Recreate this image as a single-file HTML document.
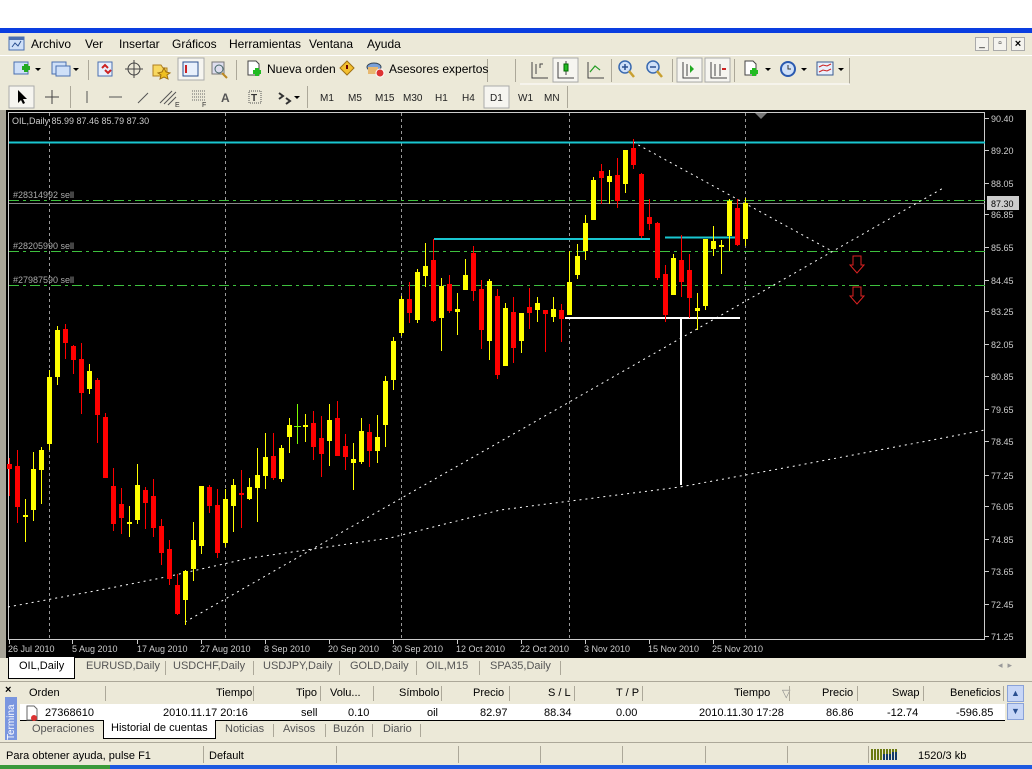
<!DOCTYPE html>
<html><head><meta charset="utf-8"><style>
*{margin:0;padding:0;box-sizing:border-box}
body{width:1032px;height:769px;overflow:hidden;background:#ECE9D8;font-family:"Liberation Sans",sans-serif;font-size:12px;color:#000;position:relative}
.a{position:absolute}
.menu span{position:absolute;top:37px;font-size:12px}
.tb{position:absolute;background:#ECE9D8}
.ic{position:absolute;width:16px;height:16px}
.tf{position:absolute;top:89px;font-size:11px}
.tab{position:absolute;top:660px;font-size:11px;color:#555}
.hd{position:absolute;top:687px;font-size:11px}
.rw{position:absolute;top:707px;font-size:11px}
.sep{position:absolute;width:1px;background:#aca899}
</style></head><body>
<div class="a" style="left:0;top:0;width:1032px;height:28px;background:#fff"></div>
<div class="a" style="left:0;top:28px;width:1032px;height:5px;background:#0A3EE0"></div>
<div class="a" style="left:0;top:765px;width:1032px;height:4px;background:#1D5AE0"></div>
<div class="a" style="left:0;top:765px;width:110px;height:4px;background:#3A9A3A"></div>
<!-- menu -->
<div class="menu">
<svg class="a" style="left:8px;top:35px" width="18" height="18"><rect x="1" y="2" width="15" height="13" fill="#cfe0f8" stroke="#4a6fb0"/><rect x="1" y="2" width="15" height="3" fill="#4a6fb0"/><path d="M4 12l3-4 3 3 3-5" stroke="#2a4f90" fill="none"/></svg>
<span style="left:31px">Archivo</span><span style="left:85px">Ver</span><span style="left:119px">Insertar</span><span style="left:172px">Gráficos</span><span style="left:229px">Herramientas</span><span style="left:309px">Ventana</span><span style="left:367px">Ayuda</span>
</div>
<div class="a" style="left:975px;top:37px;width:14px;height:14px;border:1px solid #aaa;background:#f4f3ee;font-size:10px;text-align:center;line-height:12px">_</div>
<div class="a" style="left:993px;top:37px;width:14px;height:14px;border:1px solid #aaa;background:#f4f3ee;font-size:10px;text-align:center;line-height:12px">▫</div>
<div class="a" style="left:1011px;top:37px;width:14px;height:14px;border:1px solid #aaa;background:#f4f3ee;font-size:11px;text-align:center;line-height:12px;font-weight:bold">×</div>
<div class="a" style="left:0;top:55px;width:1032px;height:1px;background:#fff"></div>
<!-- toolbar 1 -->
<svg class="a" style="left:0;top:56px" width="1032" height="54">
<g fill="none">
<rect x="14" y="6" width="14" height="12" fill="#cfe0f8" stroke="#4a6fb0"/><path d="M22 12h8M26 8v8" stroke="#2a2" stroke-width="4"/><path d="M35 12l3 3 3-3z" fill="#000"/>
<rect x="52" y="6" width="14" height="12" fill="#cfe0f8" stroke="#4a6fb0"/><rect x="56" y="10" width="14" height="10" fill="#cfe0f8" stroke="#4a6fb0"/><path d="M73 12l3 3 3-3z" fill="#000"/>
<line x1="88.5" y1="4" x2="88.5" y2="24" stroke="#aca899"/>
<rect x="98" y="6" width="14" height="14" fill="#e8f0fc" stroke="#4a6fb0"/><path d="M102 12l3-3 3 3M105 14l3 3 3-3" stroke="#c22" stroke-width="2"/>
<circle cx="134" cy="13" r="6" stroke="#444"/><path d="M134 4v18M125 13h18" stroke="#444"/>
<path d="M153 9h8l2 3h4v8h-14z" fill="#f8d860" stroke="#b08020"/><path d="M164 12l2 4 4 1-3 2 1 4-4-2-4 2 1-4-3-2 4-1z" fill="#f0c020" stroke="#a07010"/>
<rect x="178" y="2" width="26" height="22" fill="#f6f5f0" stroke="#aaa"/><rect x="183" y="6" width="15" height="14" fill="#e8f0fc" stroke="#2a4f90"/><path d="M186 9v8" stroke="#c22" stroke-width="2"/>
<rect x="212" y="6" width="12" height="12" fill="#dde" stroke="#777"/><circle cx="219" cy="13" r="4" stroke="#466"/><path d="M222 17l5 5" stroke="#b82" stroke-width="2"/>
<line x1="236.5" y1="4" x2="236.5" y2="24" stroke="#aca899"/>
<path d="M248 5h8l3 3v11h-11z" fill="#fff" stroke="#444"/><path d="M253 16h8M257 12v8" stroke="#2b2" stroke-width="4"/>
<path d="M347 5l7 7-7 7-7-7z" fill="#f4c030" stroke="#a07010"/><path d="M347 9v4" stroke="#600" stroke-width="2"/>
<ellipse cx="374" cy="11" rx="7" ry="4" fill="#7aa0d8" stroke="#345"/><rect x="368" y="11" width="10" height="7" fill="#e8b870"/><circle cx="380" cy="17" r="4" fill="#d33" stroke="#fff"/>
<line x1="487.5" y1="3" x2="487.5" y2="26" stroke="#aca899"/>
<line x1="515.5" y1="3" x2="515.5" y2="26" stroke="#aca899"/>
<path d="M532 6v16h16M536 8v10M540 12v-4h3" stroke="#444"/>
<rect x="553" y="2" width="25" height="24" fill="#f6f5f0" stroke="#aaa"/><path d="M558 6v16h16M566 5v14" stroke="#444"/><rect x="564" y="8" width="4" height="7" fill="#2b2" stroke="#060"/>
<path d="M588 6v16h16M590 16l5-6 5 4" stroke="#444"/><path d="M590 16l5-6 5 4" stroke="#2a2"/>
<line x1="611.5" y1="3" x2="611.5" y2="26" stroke="#aca899"/>
<circle cx="625" cy="11" r="6" fill="#cfe0f8" stroke="#3a6ab0" stroke-width="1.5"/><path d="M622 11h6M625 8v6" stroke="#2a4f90" stroke-width="1.5"/><path d="M629 15l5 6" stroke="#c9a030" stroke-width="2.5"/>
<circle cx="653" cy="11" r="6" fill="#cfe0f8" stroke="#3a6ab0" stroke-width="1.5"/><path d="M650 11h6" stroke="#2a4f90" stroke-width="1.5"/><path d="M657 15l5 6" stroke="#c9a030" stroke-width="2.5"/>
<line x1="672.5" y1="3" x2="672.5" y2="26" stroke="#aca899"/>
<rect x="677" y="2" width="25" height="24" fill="#f6f5f0" stroke="#aaa"/><path d="M683 6v16h16M687 8v12" stroke="#444"/><path d="M690 9l4 4-4 4z" fill="#2a2"/>
<rect x="705" y="2" width="25" height="24" fill="#f6f5f0" stroke="#aaa"/><path d="M711 6v16h16M715 8v12M720 8v12" stroke="#444"/><path d="M722 13h4" stroke="#c22" stroke-width="2"/>
<line x1="734.5" y1="3" x2="734.5" y2="26" stroke="#aca899"/>
<path d="M745 5h8l3 3v11h-11z" fill="#fff" stroke="#444"/><path d="M750 16h8M754 12v8" stroke="#2b2" stroke-width="4"/><path d="M765 12l3 3 3-3z" fill="#000"/>
<circle cx="788" cy="13" r="7" fill="#cfe0f8" stroke="#2a5ab0" stroke-width="2"/><path d="M788 9v4h3" stroke="#333"/><path d="M801 12l3 3 3-3z" fill="#000"/>
<rect x="817" y="6" width="16" height="13" fill="#e8f0fc" stroke="#3a5a90"/><path d="M819 11l4-2 4 1 4-2M819 16l4-2 4 1 4-2" stroke="#c22"/><path d="M838 12l3 3 3-3z" fill="#000"/>
<line x1="849.5" y1="2" x2="849.5" y2="28" stroke="#aca899"/>
<path d="M520 28h330" stroke="#fff"/>
<!-- toolbar2 -->
<rect x="9" y="30" width="25" height="22" fill="#f6f5f0" stroke="#aaa"/><path d="M18 34v13l3-3 2 4 2-1-2-4h4z" fill="#000"/>
<path d="M52 34v14M45 41h14" stroke="#444"/>
<line x1="70.5" y1="30" x2="70.5" y2="52" stroke="#aca899"/>
<path d="M87 35v12M109 41h13M138 47l10-10" stroke="#555"/>
<path d="M160 47l12-12M164 48l12-12M168 49l8-8" stroke="#555"/><text x="175" y="51" font-size="7" fill="#333">E</text>
<path d="M192 35h14M192 38h14M192 41h14M192 44h14" stroke="#666" stroke-dasharray="1 1"/><text x="202" y="51" font-size="7" fill="#333">F</text>
<text x="221" y="46" font-size="12" font-weight="bold" fill="#555" font-family="Liberation Sans">A</text>
<rect x="249" y="35" width="12" height="12" fill="none" stroke="#555" stroke-dasharray="1 1"/><text x="251" y="45" font-size="10" font-weight="bold" fill="#333">T</text>
<path d="M279 37l4 3-4 3M286 42l4 3-4 3" stroke="#333" stroke-width="2"/><path d="M294 40l3 3 3-3z" fill="#000"/>
<line x1="307.5" y1="30" x2="307.5" y2="52" stroke="#aca899"/>
<line x1="567.5" y1="30" x2="567.5" y2="52" stroke="#aca899"/>
<rect x="484" y="30" width="25" height="22" fill="#f6f5f0" stroke="#aaa"/>
</g>
<g font-size="10" fill="#222" font-family="Liberation Sans"><text x="320" y="45">M1</text><text x="348" y="45">M5</text><text x="375" y="45">M15</text><text x="403" y="45">M30</text><text x="435" y="45">H1</text><text x="462" y="45">H4</text><text x="490" y="45">D1</text><text x="518" y="45">W1</text><text x="544" y="45">MN</text></g>
</svg>
<div class="a" style="left:267px;top:62px;font-size:12px">Nueva orden</div>
<div class="a" style="left:389px;top:62px;font-size:12px">Asesores expertos</div>
<!-- chart -->
<div class="a" style="left:6px;top:110px;width:1020px;height:548px;background:#000"></div>
<svg class="a" style="left:0;top:110px" width="1032" height="548" viewBox="0 110 1032 548">
<rect x="8.5" y="112.5" width="976" height="527" fill="none" stroke="#ccc"/>
<g stroke="#999" stroke-dasharray="3 3"><path d="M49.5 113V640M225.5 113V640M401.5 113V640M569.5 113V640M745.5 113V640"/></g>
<path d="M755 113h12l-6 6z" fill="#777"/>
<path d="M9 142.5H985" stroke="#19c6d0" stroke-width="2"/>
<path d="M9 200.5H985" stroke="#3ec03e" stroke-dasharray="10 4 3 4"/>
<path d="M9 203.5H985" stroke="#888"/>
<path d="M9 251.5H985M9 285.5H985" stroke="#3ec03e" stroke-dasharray="10 4 3 4"/>
<path d="M434 239h216M665 237.5h70" stroke="#19c6d0" stroke-width="2"/>
<path d="M565 318h175M681 318v167" stroke="#fff" stroke-width="2"/>
<path d="M633 142L830 250M185 622L945 187M8 607L100 590L166 577L250 558L390 538L500 510L680 487L800 465L985 430" stroke="#fff" fill="none" stroke-dasharray="2 4"/>
<path d="M853 256h8v9h3l-7 8-7-8h3z M853 287h8v9h3l-7 8-7-8h3z" fill="none" stroke="#d22"/>
<g font-size="9" fill="#aaa" font-family="Liberation Sans"><text x="13" y="198">#28314992 sell</text><text x="13" y="249">#28205990 sell</text><text x="13" y="283">#27987590 sell</text></g>
<text x="12" y="124" font-size="9" fill="#ccc" font-family="Liberation Sans">OIL,Daily  85.99 87.46 85.79 87.30</text>
<!-- wicks -->
<path stroke="#FF0000" fill="none" d="M9.5 458V496M17.5 450V523M65.5 324V359M73.5 345V374M81.5 343V414M97.5 378V443M105.5 413V478M113.5 468V531M121.5 488V534M145.5 487V529M153.5 479V537M161.5 519V565M169.5 540V585M177.5 574V615M209.5 485V513M217.5 489V558M241.5 470V528M273.5 433V480M313.5 411V460M321.5 416V477M337.5 401V456M345.5 434V470M369.5 424V467M409.5 282V323M433.5 239V322M449.5 275V313M473.5 246V301M481.5 280V349M497.5 289V379M513.5 297V363M529.5 288V329M545.5 310V352M561.5 304V342M601.5 164V204M617.5 158V208M633.5 139V169M641.5 173V238M649.5 199V230M657.5 222V280M665.5 265V322M681.5 235V297M689.5 254V318M737.5 199V246"/>
<path stroke="#FFFF00" fill="none" d="M25.5 499V542M33.5 452V521M41.5 447V504M49.5 370V450M57.5 326V385M89.5 364V394M129.5 506V537M137.5 464V524M185.5 570V625M193.5 522V581M201.5 486V554M225.5 489V547M233.5 479V532M249.5 478V500M257.5 448V522M265.5 433V489M281.5 445V482M289.5 418V453M305.5 414V442M329.5 404V466M353.5 443V490M361.5 418V464M377.5 415V463M385.5 376V447M393.5 337V390M401.5 296V336M417.5 269V323M425.5 243V287M441.5 278V351M457.5 293V335M465.5 259V290M489.5 279V360M505.5 303V366M521.5 313V353M537.5 297V322M553.5 297V322M569.5 251V315M577.5 244V279M585.5 215V260M593.5 177V220M609.5 170V204M625.5 150V193M673.5 254V295M697.5 293V330M705.5 239V310M713.5 226V256M721.5 240V274M729.5 199V251M745.5 198V246"/>
<path stroke="#7CFC00" d="M297.5 404V444M294 426.5h7"/>
<g fill="#FF0000">
<rect x="7" y="464" width="5" height="5"/><rect x="15" y="466" width="5" height="41"/><rect x="63" y="329" width="5" height="14"/><rect x="71" y="346" width="5" height="14"/><rect x="79" y="359" width="5" height="34"/><rect x="95" y="380" width="5" height="35"/><rect x="103" y="417" width="5" height="61"/><rect x="111" y="486" width="5" height="38"/><rect x="119" y="504" width="5" height="14"/><rect x="143" y="490" width="5" height="13"/><rect x="151" y="496" width="5" height="32"/><rect x="159" y="526" width="5" height="27"/><rect x="167" y="549" width="5" height="30"/><rect x="175" y="585" width="5" height="29"/><rect x="207" y="487" width="5" height="19"/><rect x="215" y="505" width="5" height="48"/><rect x="239" y="493" width="5" height="2"/><rect x="271" y="456" width="5" height="22"/><rect x="311" y="423" width="5" height="24"/><rect x="319" y="438" width="5" height="16"/><rect x="335" y="418" width="5" height="38"/><rect x="343" y="446" width="5" height="11"/><rect x="367" y="432" width="5" height="19"/><rect x="407" y="299" width="5" height="14"/><rect x="431" y="260" width="5" height="61"/><rect x="447" y="284" width="5" height="27"/><rect x="471" y="253" width="5" height="38"/><rect x="479" y="289" width="5" height="41"/><rect x="495" y="296" width="5" height="79"/><rect x="511" y="312" width="5" height="36"/><rect x="527" y="307" width="5" height="6"/><rect x="543" y="310" width="5" height="4"/><rect x="559" y="310" width="5" height="9"/><rect x="599" y="171" width="5" height="7"/><rect x="615" y="175" width="5" height="26"/><rect x="631" y="148" width="5" height="17"/><rect x="639" y="174" width="5" height="62"/><rect x="647" y="217" width="5" height="7"/><rect x="655" y="223" width="5" height="55"/><rect x="663" y="274" width="5" height="41"/><rect x="679" y="260" width="5" height="22"/><rect x="687" y="270" width="5" height="28"/><rect x="735" y="208" width="5" height="37"/>
</g>
<g fill="#FFFF00">
<rect x="23" y="515" width="5" height="2"/><rect x="31" y="469" width="5" height="41"/><rect x="39" y="450" width="5" height="20"/><rect x="47" y="377" width="5" height="67"/><rect x="55" y="330" width="5" height="47"/><rect x="87" y="371" width="5" height="18"/><rect x="127" y="522" width="5" height="2"/><rect x="135" y="485" width="5" height="35"/><rect x="183" y="571" width="5" height="29"/><rect x="191" y="540" width="5" height="29"/><rect x="199" y="486" width="5" height="60"/><rect x="223" y="499" width="5" height="44"/><rect x="231" y="485" width="5" height="21"/><rect x="247" y="487" width="5" height="12"/><rect x="255" y="475" width="5" height="13"/><rect x="263" y="457" width="5" height="19"/><rect x="279" y="448" width="5" height="31"/><rect x="287" y="425" width="5" height="12"/><rect x="303" y="425" width="5" height="2"/><rect x="327" y="420" width="5" height="21"/><rect x="351" y="459" width="5" height="4"/><rect x="359" y="431" width="5" height="31"/><rect x="375" y="437" width="5" height="14"/><rect x="383" y="381" width="5" height="44"/><rect x="391" y="341" width="5" height="39"/><rect x="399" y="299" width="5" height="34"/><rect x="415" y="272" width="5" height="48"/><rect x="423" y="266" width="5" height="10"/><rect x="439" y="286" width="5" height="32"/><rect x="455" y="309" width="5" height="3"/><rect x="463" y="275" width="5" height="15"/><rect x="487" y="281" width="5" height="60"/><rect x="503" y="308" width="5" height="58"/><rect x="519" y="313" width="5" height="28"/><rect x="535" y="303" width="5" height="7"/><rect x="551" y="309" width="5" height="8"/><rect x="567" y="282" width="5" height="33"/><rect x="575" y="256" width="5" height="19"/><rect x="583" y="223" width="5" height="28"/><rect x="591" y="180" width="5" height="40"/><rect x="607" y="176" width="5" height="6"/><rect x="623" y="150" width="5" height="34"/><rect x="671" y="258" width="5" height="37"/><rect x="695" y="308" width="5" height="3"/><rect x="703" y="239" width="5" height="67"/><rect x="711" y="241" width="5" height="8"/><rect x="719" y="245" width="5" height="2"/><rect x="727" y="201" width="5" height="35"/><rect x="743" y="203" width="5" height="36"/>
</g>
<!-- price axis -->
<g stroke="#ccc"><path d="M985 118.5h4M985 150.5h4M985 183.5h4M985 214.5h4M985 247.5h4M985 280.5h4M985 311.5h4M985 344.5h4M985 376.5h4M985 409.5h4M985 441.5h4M985 475.5h4M985 506.5h4M985 539.5h4M985 571.5h4M985 604.5h4M985 636.5h4"/></g>
<g font-size="9" fill="#ccc" font-family="Liberation Sans"><text x="991" y="122">90.40</text><text x="991" y="154">89.20</text><text x="991" y="187">88.05</text><text x="991" y="218">86.85</text><text x="991" y="251">85.65</text><text x="991" y="284">84.45</text><text x="991" y="315">83.25</text><text x="991" y="348">82.05</text><text x="991" y="380">80.85</text><text x="991" y="413">79.65</text><text x="991" y="445">78.45</text><text x="991" y="479">77.25</text><text x="991" y="510">76.05</text><text x="991" y="543">74.85</text><text x="991" y="575">73.65</text><text x="991" y="608">72.45</text><text x="991" y="640">71.25</text></g>
<rect x="987" y="196" width="32" height="14" fill="#ccc"/><text x="991" y="207" font-size="9" fill="#000" font-family="Liberation Sans">87.30</text>
<!-- time axis -->
<g stroke="#ccc"><path d="M9.5 640v4M72.5 640v4M137.5 640v4M201.5 640v4M265.5 640v4M329.5 640v4M393.5 640v4M457.5 640v4M521.5 640v4M585.5 640v4M649.5 640v4M713.5 640v4"/></g>
<g font-size="9" fill="#ccc" font-family="Liberation Sans"><text x="8" y="652">26 Jul 2010</text><text x="72" y="652">5 Aug 2010</text><text x="137" y="652">17 Aug 2010</text><text x="200" y="652">27 Aug 2010</text><text x="264" y="652">8 Sep 2010</text><text x="328" y="652">20 Sep 2010</text><text x="392" y="652">30 Sep 2010</text><text x="456" y="652">12 Oct 2010</text><text x="520" y="652">22 Oct 2010</text><text x="584" y="652">3 Nov 2010</text><text x="648" y="652">15 Nov 2010</text><text x="712" y="652">25 Nov 2010</text></g>
</svg>
<div class="a" style="left:0;top:110px;width:6px;height:548px;background:#a8a598"></div>
<!-- chart tabs -->
<div class="a" style="left:8px;top:657px;width:67px;height:22px;background:#fff;border:1px solid #000;border-top:none"></div>
<div class="tab" style="left:19px;color:#000">OIL,Daily</div>
<div class="tab" style="left:86px">EURUSD,Daily</div>
<div class="tab" style="left:173px">USDCHF,Daily</div>
<div class="tab" style="left:263px">USDJPY,Daily</div>
<div class="tab" style="left:350px">GOLD,Daily</div>
<div class="tab" style="left:426px">OIL,M15</div>
<div class="tab" style="left:490px">SPA35,Daily</div>
<div class="sep" style="left:165px;top:661px;height:14px"></div><div class="sep" style="left:253px;top:661px;height:14px"></div><div class="sep" style="left:339px;top:661px;height:14px"></div><div class="sep" style="left:416px;top:661px;height:14px"></div><div class="sep" style="left:479px;top:661px;height:14px"></div><div class="sep" style="left:560px;top:661px;height:14px"></div>
<div class="a" style="left:998px;top:660px;font-size:9px;color:#999">◂ &nbsp;▸</div>
<div class="a" style="left:0;top:681px;width:1032px;height:1px;background:#aca899"></div>
<!-- terminal -->
<div class="a" style="left:5px;top:684px;font-size:11px;font-weight:bold">×</div>
<div class="a" style="left:5px;top:697px;width:12px;height:43px;background:#7A96DF"></div>
<div class="a" style="left:6px;top:740px;transform:rotate(-90deg);transform-origin:0 0;font-size:10px;color:#fff">Termina</div>
<div class="a" style="left:20px;top:684px;width:1005px;height:20px;background:#ECE9D8"></div>
<div class="hd" style="left:29px">Orden</div><div class="hd" style="left:216px">Tiempo</div><div class="hd" style="left:296px">Tipo</div><div class="hd" style="left:330px">Volu...</div><div class="hd" style="left:399px">Símbolo</div><div class="hd" style="left:473px">Precio</div><div class="hd" style="left:548px">S / L</div><div class="hd" style="left:616px">T / P</div><div class="hd" style="left:734px">Tiempo</div><div class="hd" style="left:782px;color:#888">▽</div><div class="hd" style="left:822px">Precio</div><div class="hd" style="left:892px">Swap</div><div class="hd" style="left:950px">Beneficios</div>
<div class="sep" style="left:105px;top:686px;height:15px"></div><div class="sep" style="left:253px;top:686px;height:15px"></div><div class="sep" style="left:320px;top:686px;height:15px"></div><div class="sep" style="left:373px;top:686px;height:15px"></div><div class="sep" style="left:441px;top:686px;height:15px"></div><div class="sep" style="left:509px;top:686px;height:15px"></div><div class="sep" style="left:574px;top:686px;height:15px"></div><div class="sep" style="left:642px;top:686px;height:15px"></div><div class="sep" style="left:789px;top:686px;height:15px"></div><div class="sep" style="left:857px;top:686px;height:15px"></div><div class="sep" style="left:923px;top:686px;height:15px"></div><div class="sep" style="left:1003px;top:686px;height:15px"></div>
<div class="a" style="left:20px;top:704px;width:985px;height:17px;background:#fff;border-bottom:1px solid #000"></div>
<svg class="a" style="left:25px;top:705px" width="14" height="16"><path d="M2 1h7l3 3v11H2z" fill="#fff" stroke="#666"/><circle cx="9" cy="13" r="3" fill="#d33"/></svg>
<div class="rw" style="left:45px">27368610</div><div class="rw" style="left:163px">2010.11.17 20:16</div><div class="rw" style="left:301px">sell</div><div class="rw" style="left:348px">0.10</div><div class="rw" style="left:427px">oil</div><div class="rw" style="left:480px">82.97</div><div class="rw" style="left:544px">88.34</div><div class="rw" style="left:616px">0.00</div><div class="rw" style="left:699px">2010.11.30 17:28</div><div class="rw" style="left:826px">86.86</div><div class="rw" style="left:887px">-12.74</div><div class="rw" style="left:956px">-596.85</div>
<div class="a" style="left:1007px;top:685px;width:17px;height:17px;background:#c7d6f7;border:1px solid #8aa2d8;font-size:9px;text-align:center;color:#2a4f90;line-height:15px">▲</div>
<div class="a" style="left:1007px;top:703px;width:17px;height:17px;background:#c7d6f7;border:1px solid #8aa2d8;font-size:9px;text-align:center;color:#2a4f90;line-height:15px">▼</div>
<div class="a" style="left:103px;top:720px;width:113px;height:19px;background:#fff;border:1px solid #000;border-top:none"></div>
<div class="a" style="left:32px;top:723px;font-size:11px;color:#555">Operaciones</div>
<div class="a" style="left:111px;top:722px;font-size:11px">Historial de cuentas</div>
<div class="a" style="left:225px;top:723px;font-size:11px;color:#555">Noticias</div>
<div class="a" style="left:283px;top:723px;font-size:11px;color:#555">Avisos</div>
<div class="a" style="left:333px;top:723px;font-size:11px;color:#555">Buzón</div>
<div class="a" style="left:383px;top:723px;font-size:11px;color:#555">Diario</div>
<div class="sep" style="left:273px;top:724px;height:13px"></div><div class="sep" style="left:325px;top:724px;height:13px"></div><div class="sep" style="left:372px;top:724px;height:13px"></div><div class="sep" style="left:420px;top:724px;height:13px"></div>
<div class="a" style="left:0;top:742px;width:1032px;height:1px;background:#aca899"></div>
<!-- status -->
<div class="a" style="left:6px;top:750px;font-size:11px">Para obtener ayuda, pulse F1</div>
<div class="a" style="left:209px;top:750px;font-size:11px">Default</div>
<div class="sep" style="left:203px;top:746px;height:17px"></div><div class="sep" style="left:336px;top:746px;height:17px"></div><div class="sep" style="left:458px;top:746px;height:17px"></div><div class="sep" style="left:540px;top:746px;height:17px"></div><div class="sep" style="left:622px;top:746px;height:17px"></div><div class="sep" style="left:705px;top:746px;height:17px"></div><div class="sep" style="left:787px;top:746px;height:17px"></div><div class="sep" style="left:868px;top:746px;height:17px"></div>
<svg class="a" style="left:871px;top:749px" width="26" height="12"><path d="M1 0v11M4 0v11M7 0v11M10 0v11M13 0v11M16 0v11M19 0v11M22 0v11M25 0v11" stroke="#6a7a10" stroke-width="2"/><path d="M13 5v6M16 5v6M19 5v6M22 3v8M25 3v8" stroke="#123a6a" stroke-width="2"/></svg>
<div class="a" style="left:918px;top:750px;font-size:11px">1520/3 kb</div>
</body></html>
